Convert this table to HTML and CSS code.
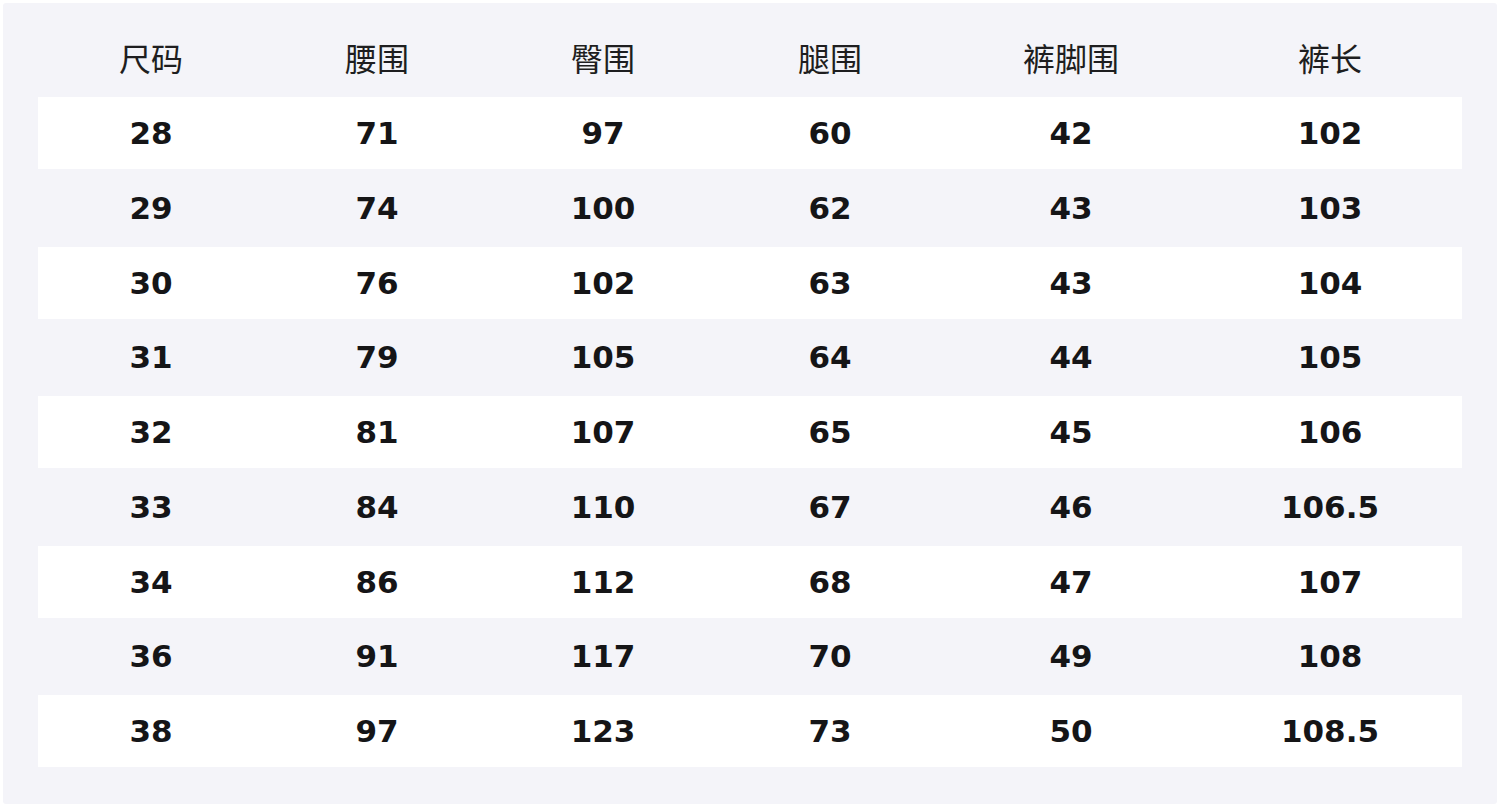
FILE: index.html
```html
<!DOCTYPE html>
<html lang="zh">
<head>
<meta charset="utf-8">
<title>尺码表</title>
<link rel="stylesheet" href="styles.css">
</head>
<body>
<div class="panel">
  <div class="table">
    <div class="row head">
      <div>尺码</div><div>腰围</div><div>臀围</div><div>腿围</div><div>裤脚围</div><div>裤长</div>
    </div>
    <div class="row odd"><div>28</div><div>71</div><div>97</div><div>60</div><div>42</div><div>102</div></div>
    <div class="row even"><div>29</div><div>74</div><div>100</div><div>62</div><div>43</div><div>103</div></div>
    <div class="row odd"><div>30</div><div>76</div><div>102</div><div>63</div><div>43</div><div>104</div></div>
    <div class="row even"><div>31</div><div>79</div><div>105</div><div>64</div><div>44</div><div>105</div></div>
    <div class="row odd"><div>32</div><div>81</div><div>107</div><div>65</div><div>45</div><div>106</div></div>
    <div class="row even"><div>33</div><div>84</div><div>110</div><div>67</div><div>46</div><div>106.5</div></div>
    <div class="row odd"><div>34</div><div>86</div><div>112</div><div>68</div><div>47</div><div>107</div></div>
    <div class="row even"><div>36</div><div>91</div><div>117</div><div>70</div><div>49</div><div>108</div></div>
    <div class="row odd"><div>38</div><div>97</div><div>123</div><div>73</div><div>50</div><div>108.5</div></div>
  </div>
</div>
</body>
</html>
```

FILE: styles.css
```css
html, body {
  margin: 0;
  padding: 0;
  background: #ffffff;
}
body {
  padding: 3px;
  width: 1494px;
  height: 801px;
}
.panel {
  box-sizing: border-box;
  width: 1494px;
  height: 801px;
  background: #f4f4f9;
  border-radius: 3px;
  padding: 19px 35px 0 35px;
}
.table {
  display: flex;
  flex-direction: column;
  width: 1424px;
}
.row {
  display: grid;
  grid-template-columns: 226px 226px 226px 228px 254px 264px;
  align-items: center;
  text-align: center;
  font-family: "DejaVu Sans", sans-serif;
  font-weight: bold;
  font-size: 31px;
  color: #151517;
}
.row.head {
  box-sizing: border-box;
  height: 75px;
  padding-bottom: 6px;
  font-family: "Noto Sans CJK SC", sans-serif;
  font-weight: 400;
  font-size: 32px;
  color: #1e1e20;
}
.row.odd {
  height: 72px;
  background: #ffffff;
}
.row.even {
  height: 77.5px;
}
```
